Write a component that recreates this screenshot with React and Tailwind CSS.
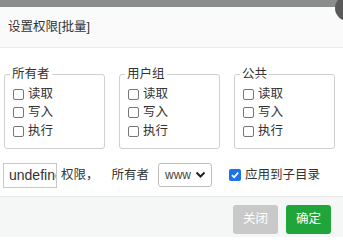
import React from "react";

const Box = () => (
  <span className="inline-block w-[11px] h-[11px] border border-[#767676] rounded-[2px] bg-white shrink-0" />
);

const Row = ({ label }) => (
  <div className="flex items-center h-[18.5px]">
    <span className="ml-[3px] flex items-center"><Box /></span>
    <span className="ml-[4px]">{label}</span>
  </div>
);

const Group = ({ title }) => (
  <fieldset className="w-[101px] border border-[#d0d0d0] rounded-[3px] pl-[5px] pt-[3px] pb-[7px] min-w-0">
    <legend className="px-[2px] leading-[16px]">{title}</legend>
    <Row label="读取" />
    <Row label="写入" />
    <Row label="执行" />
  </fieldset>
);

export default function App() {
  return (
    <div
      className="relative w-[343px] h-[237px] overflow-hidden bg-white text-[12.5px] text-[#333]"
      style={{ fontFamily: '"Liberation Sans", "Noto Sans CJK SC", sans-serif' }}
    >
      <div className="h-[7px] bg-[#8b8d8d]" />
      <div className="h-[41px] bg-[#fafafa] border-b border-[#ebebeb] flex items-center px-[8px] text-[12.5px] text-[#333]">
        设置权限[批量]
      </div>
      <div className="px-[4px] pt-[18px] flex gap-[14px]">
        <Group title="所有者" />
        <Group title="用户组" />
        <Group title="公共" />
      </div>
      <div className="mt-[14px] h-[25px] flex items-center pl-[3px]">
        <div className="w-[54px] h-[25px] shrink-0 border border-[#c8c8c8] pl-[5px] overflow-hidden flex items-center text-[14px] whitespace-nowrap">
          undefined
        </div>
        <span className="ml-[4px] whitespace-nowrap">权限，</span>
        <span className="ml-[13px] whitespace-nowrap">所有者</span>
        <div className="ml-[9px] w-[54px] h-[24px] shrink-0 border border-[#bdbdbd] rounded-[3px] flex items-center pl-[6px] text-[12px] text-[#444]">
          <span>www</span>
          <svg className="ml-[4px]" width="11" height="8" viewBox="0 0 11 8">
            <path d="M1.5 1.5 L5.5 5.5 L9.5 1.5" fill="none" stroke="#222" strokeWidth="2" />
          </svg>
        </div>
        <span className="ml-[17px] w-[12px] h-[12px] shrink-0 rounded-[2px] bg-[#1a73e8] flex items-center justify-center">
          <svg width="10" height="10" viewBox="0 0 10 10">
            <path d="M2 5.2 L4.1 7.3 L8.2 2.6" fill="none" stroke="white" strokeWidth="1.8" />
          </svg>
        </span>
        <span className="ml-[4px] whitespace-nowrap">应用到子目录</span>
      </div>
      <div className="mt-[8px] border-t border-[#e8e8e8] bg-[#f5f6f6] h-[44px] flex justify-end items-start pt-[8px] pr-[12px] gap-[8px]">
        <button className="w-[45px] h-[29px] rounded-[3px] bg-[#c9c9c9] text-white text-[12.5px]">关闭</button>
        <button className="w-[45px] h-[29px] rounded-[3px] bg-[#20a53a] text-white text-[12.5px]">确定</button>
      </div>
      <div className="absolute left-[335px] top-[-5px] w-[26px] h-[26px] rounded-full bg-[#5a5a5a]" />
    </div>
  );
}
